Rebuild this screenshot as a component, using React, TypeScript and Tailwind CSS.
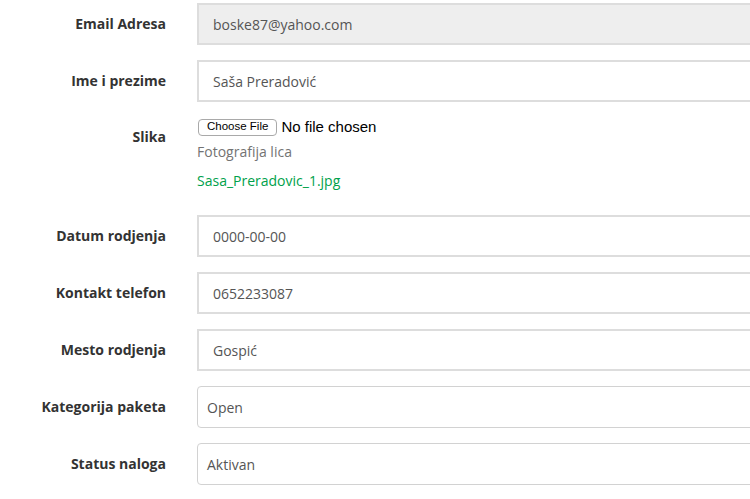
import type { ReactNode } from 'react';

const font = { fontFamily: '"Open Sans", "Noto Sans", sans-serif' };

function Row({ label, children }: { label: string; children: ReactNode }) {
  return (
    <div className="flex items-center mb-[15px]">
      <label className="w-[166px] shrink-0 text-right text-[14px] leading-5 font-bold text-[#333]">
        {label}
      </label>
      <div className="ml-[31px] flex-1 -mr-[40px]">{children}</div>
    </div>
  );
}

function TextBox({ value, readOnly = false }: { value: string; readOnly?: boolean }) {
  return (
    <div
      className={`h-[42px] flex items-center px-[14px] border-2 border-[#dddddd] text-[14px] text-[#555] ${
        readOnly ? 'bg-[#eeeeee]' : 'bg-white'
      }`}
    >
      {value}
    </div>
  );
}

function SelectBox({ value }: { value: string }) {
  return (
    <div className="h-[42px] flex items-center px-[9px] border border-[#d2d2d2] rounded-[4px] bg-white text-[14px] text-[#555]">
      {value}
    </div>
  );
}

export default function App() {
  return (
    <div className="w-[750px] h-[499px] overflow-hidden bg-white pt-[3px]" style={font}>
      <Row label="Email Adresa">
        <TextBox value="boske87@yahoo.com" readOnly />
      </Row>
      <Row label="Ime i prezime">
        <TextBox value="Saša Preradović" />
      </Row>

      {/* Slika */}
      <div className="flex items-start mb-[24px]">
        <label className="w-[166px] shrink-0 text-right text-[14px] leading-5 font-bold text-[#333] pt-[10px]">
          Slika
        </label>
        <div className="ml-[31px] flex-1">
          <div className="h-5 flex items-center" style={{ fontFamily: '"Liberation Sans", Arial, sans-serif' }}>
            <span className="ml-px h-[17px] px-[8px] flex items-center border border-[#a9a9a9] rounded-[4px] bg-white text-[11.5px] text-black leading-none">
              Choose File
            </span>
            <span className="ml-[4px] text-[15px] text-black">No file chosen</span>
          </div>
          <p className="mt-[5px] text-[14px] leading-5 text-[#737373]">Fotografija lica</p>
          <p className="mt-[9px] text-[14px] leading-5 text-[#00a14b]">Sasa_Preradovic_1.jpg</p>
        </div>
      </div>

      <Row label="Datum rodjenja">
        <TextBox value="0000-00-00" />
      </Row>
      <Row label="Kontakt telefon">
        <TextBox value="0652233087" />
      </Row>
      <Row label="Mesto rodjenja">
        <TextBox value="Gospić" />
      </Row>
      <Row label="Kategorija paketa">
        <SelectBox value="Open" />
      </Row>
      <Row label="Status naloga">
        <SelectBox value="Aktivan" />
      </Row>
    </div>
  );
}
